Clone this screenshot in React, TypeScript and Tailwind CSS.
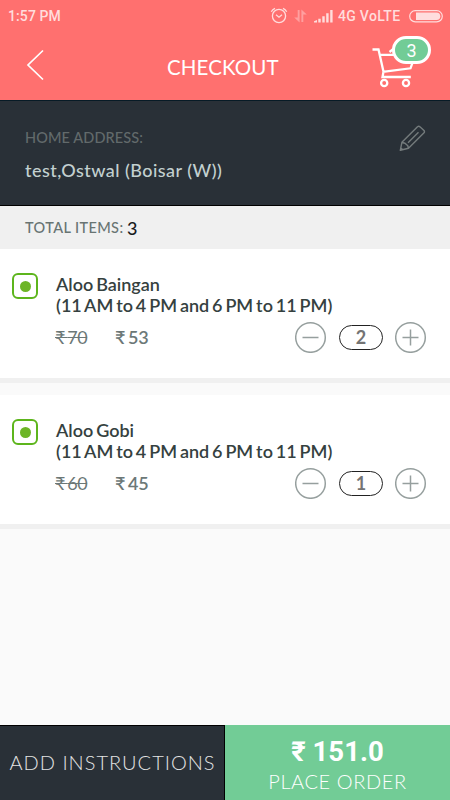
type Item = { name: string; hours: string; mrp: number; price: number; qty: number };

const items: Item[] = [
  { name: "Aloo Baingan", hours: "(11 AM to 4 PM and 6 PM to 11 PM)", mrp: 70, price: 53, qty: 2 },
  { name: "Aloo Gobi", hours: "(11 AM to 4 PM and 6 PM to 11 PM)", mrp: 60, price: 45, qty: 1 },
];

function StatusBar() {
  return (
    <div className="flex h-8 items-center pl-2 pr-[7px] font-['Roboto',sans-serif] text-sm font-medium text-[#ffdddd]">
      <span className="tracking-[0.1px]">1:57 PM</span>
      <svg className="ml-auto" width="18" height="18" viewBox="0 0 18 18" fill="none" stroke="#ffdddd" strokeWidth="1.3">
        <circle cx="9" cy="9" r="6.6" />
        <path d="M1.3 4.7Q2.5 2.5 5 1.3M16.7 4.7Q15.5 2.5 13 1.3M6 7.8 9 10.2l3-2.4" />
      </svg>
      <svg className="ml-[6px]" width="13" height="14" viewBox="0 0 13 14" fill="#ff9f9f">
        <path d="M3.7 1h1.9v12.5L.2 8.5h3.5zM7.4 13V.5l5.4 5H9.3V13z" />
      </svg>
      <svg className="ml-[7px]" width="20" height="14" viewBox="0 0 20 14" fill="#ffdddd">
        <path d="M0 12.3 3 11v2.5H0zM4.3 9.8h2.4v3.7H4.3zM8.3 7.3h2.4v6.2H8.3zM12.2 4.3h2.4v9.2h-2.4zM16.2 1h2.4v12.5h-2.4z" />
      </svg>
      <span className="ml-1 w-[66px] whitespace-nowrap tracking-[0.3px]">4G VoLTE</span>
      <svg className="ml-[5px]" width="34" height="13" viewBox="0 0 34 13">
        <rect x=".7" y=".7" width="32.6" height="11.2" rx="5.6" fill="none" stroke="#ffdddd" strokeWidth="1.2" />
        <path d="M7 2.5h20.5a3.8 3.8 0 0 1 0 7.6H7z" fill="#ffdddd" />
      </svg>
    </div>
  );
}

function Header() {
  return (
    <header className="flex h-[68px] items-start text-white">
      <svg className="ml-[26px] mt-[17px]" width="18" height="32" viewBox="0 0 18 32" fill="none" stroke="currentColor" strokeWidth="1.7">
        <path d="M17 1.5 2 16l15 14.5" />
      </svg>
      <h1 className="ml-[123px] mt-[20px] w-[113px] whitespace-nowrap text-[20.5px] leading-[30px] tracking-[0.1px]">CHECKOUT</h1>
      <div className="relative ml-[92px] mt-1 h-[56px] w-[60px]">
        <svg width="60" height="56" viewBox="0 0 60 56" fill="none" stroke="currentColor" strokeWidth="2.3">
          <path d="M0.5 13.5h6l5 22.3-1 5.2h28.3M8 18.8h30M10.8 35.8l27.7-3.5 2.5-7M17.5 16l7-5.5" />
          <circle cx="12.2" cy="47" r="3.1" />
          <circle cx="34" cy="47" r="3.1" />
        </svg>
        <span className="absolute left-[20px] top-0 flex h-7 w-[39px] items-center justify-center rounded-full border-[3px] border-white bg-[#72cc96] font-['Roboto',sans-serif] text-[18px]">
          3
        </span>
      </div>
    </header>
  );
}

function Address() {
  return (
    <section className="flex h-[106px] justify-between border-b border-t border-b-black border-t-[#071b26] bg-[#293037] pl-[25px] pr-6">
      <div>
        <p className="mt-[27px] text-[14.5px] leading-5 font-medium tracking-[0.1px] text-[#626a6b]">HOME ADDRESS:</p>
        <p className="mt-[10px] text-[18px] leading-6 font-medium tracking-[0.45px] text-[#c3d0d0]">test,Ostwal (Boisar (W))</p>
      </div>
      <svg className="mt-6" width="27" height="27" viewBox="0 0 27 27" fill="none" stroke="#747b7c" strokeWidth="1.4" strokeLinejoin="round">
        <path d="m1.3 25.3 1.6-8L18.5 1.8q1.3-1 2.7.2l3.8 3.5q1 1.3-.2 2.6L9.5 23.2zM3 17.5l3 .7 2.8 2.6.7 2.4M9 17.8 19.5 7.3M1.8 23l2 1.8" />
      </svg>
    </section>
  );
}

function Stepper({ qty }: { qty: number }) {
  return (
    <div className="flex h-8 items-center text-[#969f9e]">
      <button aria-label="Remove one" className="block">
        <svg width="32" height="32" viewBox="0 0 32 32" fill="none" stroke="currentColor" strokeWidth="1.5">
          <circle cx="15.5" cy="16.5" r="14.8" />
          <path d="M7.5 16.5h16" />
        </svg>
      </button>
      <span className="ml-3 flex h-[25px] w-[44px] items-center justify-center rounded-full border border-[#222] text-lg leading-none font-bold text-[#747474]">
        {qty}
      </span>
      <button aria-label="Add one" className="ml-3 block">
        <svg width="32" height="32" viewBox="0 0 32 32" fill="none" stroke="currentColor" strokeWidth="1.5">
          <circle cx="15.5" cy="16.5" r="14.8" />
          <path d="M7.5 16.5h16M15.5 8.5v16" />
        </svg>
      </button>
    </div>
  );
}

function ItemCard({ item }: { item: Item }) {
  return (
    <article className="flex h-[134px] border-b-[5px] border-[#f0f0f0] bg-white pl-3 pt-[25px]">
      <div className="-mt-px flex h-[26px] w-[26px] shrink-0 items-center justify-center rounded-[6px] border-2 border-[#5db51c]">
        <div className="h-[11px] w-[11px] rounded-full bg-[#6db526]" />
      </div>
      <div className="ml-[18px] w-[371px]">
        <h2 className="text-[18px] leading-[21px] font-semibold [word-spacing:-1.6px] text-[#354140]">
          {item.name}
          <br />
          <span className="whitespace-nowrap">{item.hours}</span>
        </h2>
        <div className="mt-[5px] flex items-center text-[18px] text-[#6c7877]">
          <del className="ml-[-1px] w-[60px] whitespace-nowrap tracking-[-0.5px] [word-spacing:-1.8px]">₹ {item.mrp}</del>
          <span className="font-semibold tracking-[-0.4px] [word-spacing:-1px]">₹ {item.price}</span>
          <div className="ml-auto">
            <Stepper qty={item.qty} />
          </div>
        </div>
      </div>
    </article>
  );
}

export default function App() {
  return (
    <div className="flex h-[800px] w-[450px] flex-col overflow-hidden bg-[#fafafa] font-['Lato',sans-serif]">
      <div className="bg-[#ff706f]">
        <StatusBar />
        <Header />
      </div>
      <Address />
      <div className="flex h-[43px] items-center bg-[#f0f0f0] pl-[25px] text-[14.5px] font-medium text-[#687473]">
        <span className="w-[102px] whitespace-nowrap pt-px tracking-[0.4px]">TOTAL ITEMS:</span>
        <span className="text-lg text-[#17191c]">3</span>
      </div>
      <main className="flex flex-1 flex-col gap-3">
        {items.map((item) => (
          <ItemCard key={item.name} item={item} />
        ))}
      </main>
      <footer className="flex h-[75px] text-white">
        <button className="w-[225px] whitespace-nowrap border-r border-t border-black bg-[#293037] pb-[3px] text-[20px] tracking-[1px] font-light text-[#e4e4e4]">
          <span className="ml-px">ADD INSTRUCTIONS</span>
        </button>
        <button className="flex w-[225px] flex-col items-center bg-[#72cc96]">
          <span className="mt-[11px] font-['Roboto',sans-serif] text-[27.5px] leading-8 font-bold">₹ 151.0</span>
          <span className="-mt-px text-[20px] leading-7 font-light tracking-[0.6px]">PLACE ORDER</span>
        </button>
      </footer>
    </div>
  );
}
